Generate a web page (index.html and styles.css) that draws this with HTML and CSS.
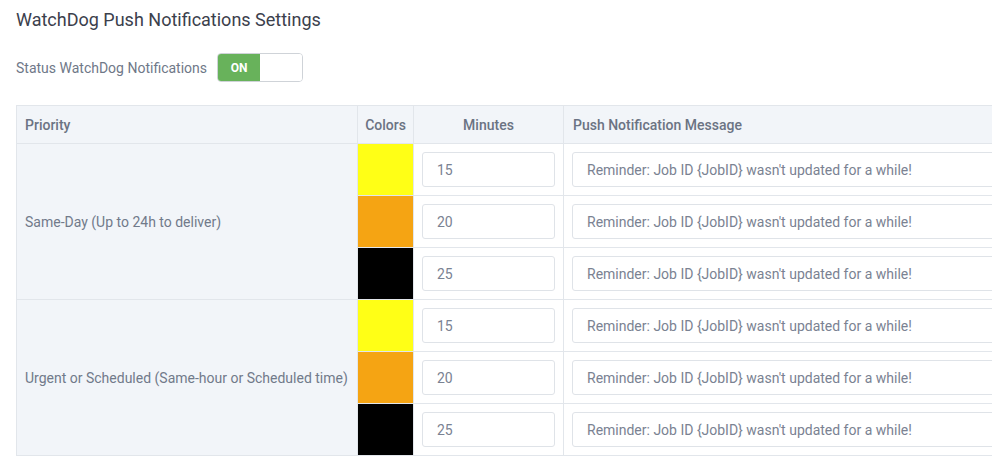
FILE: index.html
```html
<!DOCTYPE html>
<html lang="en">
<head>
    <meta charset="UTF-8">
    <title>WatchDog Push Notifications Settings</title>
    <link rel="stylesheet" href="styles.css">
</head>
<body>
    <div class="page">
        <h1 class="page-title">WatchDog Push Notifications Settings</h1>

        <div class="status-row">
            <span class="status-label">Status WatchDog Notifications</span>
            <div class="toggle">
                <span class="toggle-on">ON</span>
                <span class="toggle-off"></span>
            </div>
        </div>

        <div class="table-wrap">
            <table class="wd-table">
                <thead>
                    <tr>
                        <th class="col-priority">Priority</th>
                        <th class="col-color">Colors</th>
                        <th class="col-minutes">Minutes</th>
                        <th class="col-message">Push Notification Message</th>
                    </tr>
                </thead>
                <tbody>
                    <tr>
                        <td class="priority" rowspan="3">Same-Day (Up to 24h to deliver)</td>
                        <td class="swatch yellow"></td>
                        <td class="minutes"><input type="text" value="15"></td>
                        <td class="message"><input type="text" value="Reminder: Job ID {JobID} wasn't updated for a while!"></td>
                    </tr>
                    <tr>
                        <td class="swatch orange"></td>
                        <td class="minutes"><input type="text" value="20"></td>
                        <td class="message"><input type="text" value="Reminder: Job ID {JobID} wasn't updated for a while!"></td>
                    </tr>
                    <tr>
                        <td class="swatch black"></td>
                        <td class="minutes"><input type="text" value="25"></td>
                        <td class="message"><input type="text" value="Reminder: Job ID {JobID} wasn't updated for a while!"></td>
                    </tr>
                    <tr>
                        <td class="priority" rowspan="3">Urgent or Scheduled (Same-hour or Scheduled time)</td>
                        <td class="swatch yellow"></td>
                        <td class="minutes"><input type="text" value="15"></td>
                        <td class="message"><input type="text" value="Reminder: Job ID {JobID} wasn't updated for a while!"></td>
                    </tr>
                    <tr>
                        <td class="swatch orange"></td>
                        <td class="minutes"><input type="text" value="20"></td>
                        <td class="message"><input type="text" value="Reminder: Job ID {JobID} wasn't updated for a while!"></td>
                    </tr>
                    <tr>
                        <td class="swatch black"></td>
                        <td class="minutes"><input type="text" value="25"></td>
                        <td class="message"><input type="text" value="Reminder: Job ID {JobID} wasn't updated for a while!"></td>
                    </tr>
                </tbody>
            </table>
        </div>
    </div>
</body>
</html>
```

FILE: styles.css
```css
body {
    margin: 0;
    font-family: Roboto, "Liberation Sans", sans-serif;
    background: #fff;
}
.page {
    padding: 0 0 0 16px;
}
.page-title {
    margin: 10px 0 0;
    font-size: 18px;
    line-height: 20px;
    font-weight: 400;
    color: #3b404c;
}
.status-row {
    display: flex;
    align-items: center;
    gap: 10px;
    margin-top: 23px;
}
.status-label {
    font-size: 14px;
    color: #6f7888;
}
.toggle {
    display: flex;
    width: 84px;
    height: 27px;
    border: 1px solid #cfd3d8;
    border-radius: 4px;
    overflow: hidden;
}
.toggle-on {
    width: 42px;
    background: #68b25b;
    color: #fff;
    font-size: 12px;
    font-weight: 700;
    display: flex;
    align-items: center;
    justify-content: center;
}
.toggle-off {
    flex: 1;
    background: #fff;
}
.table-wrap {
    margin-top: 23px;
    overflow: hidden;
}
.wd-table {
    border-collapse: collapse;
    font-size: 14px;
    width: 1100px;
    table-layout: fixed;
}
.wd-table th,
.wd-table td {
    border: 1px solid #e2e6eb;
}
.wd-table th {
    background: #f2f5f9;
    color: #6b7383;
    font-weight: 500;
    height: 37px;
    padding: 0 8px;
    text-align: left;
}
.wd-table th.col-priority { width: 324px; }
.wd-table th.col-color { width: 55px; padding: 0; text-align: center; }
.wd-table th.col-minutes { width: 149px; padding: 0; text-align: center; }
.wd-table th.col-message { padding: 0 9px; }
.priority {
    background: #f2f5f9;
    color: #717a8a;
    padding: 0 8px;
}
.swatch { padding: 0; }
.swatch.yellow { background: #ffff16; }
.swatch.orange { background: #f5a413; }
.swatch.black { background: #000; }
.minutes,
.message {
    padding: 8px;
    height: 35px;
}
.wd-table input {
    box-sizing: border-box;
    display: block;
    width: 100%;
    height: 35px;
    border: 1px solid #dfe3e8;
    border-radius: 3px;
    padding: 0 14px;
    font-family: inherit;
    font-size: 14px;
    color: #7a8292;
    background: #fff;
}
```
